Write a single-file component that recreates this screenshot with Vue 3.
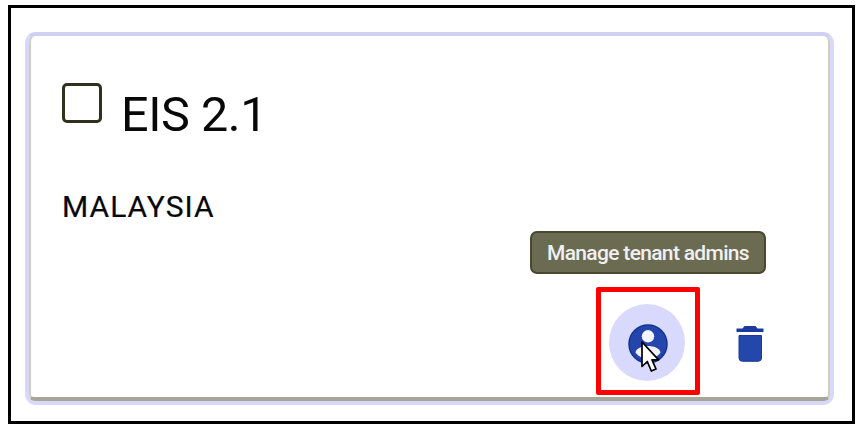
<script setup>
const tenant = { name: 'EIS 2.1', country: 'MALAYSIA' }
</script>

<template>
  <main class="frame">
    <section class="card">
      <div class="surface">
        <header class="heading">
          <span class="checkbox" role="checkbox" aria-checked="false"></span>
          <h1 class="name">{{ tenant.name }}</h1>
        </header>
        <p class="country">{{ tenant.country }}</p>
        <div class="tip-row"><div class="tip">Manage tenant admins</div></div>
        <div class="actions">
          <div class="highlight">
            <button class="account">
              <svg class="person" viewBox="0 0 40 40">
                <defs>
                  <clipPath id="disc"><circle cx="20" cy="20" r="19.3" /></clipPath>
                </defs>
                <circle cx="20" cy="20" r="19" fill="#2446ac" stroke="#12328f" stroke-width="1.5" />
                <circle cx="20" cy="12.3" r="6.2" fill="#f5f5ff" />
                <path clip-path="url(#disc)" d="M7.500 28.500C8 24 15 22 20 22s12 2 12.500 6.500C29.500 32.500 25 35 20 35S10.500 32.500 7.500 28.500Z" fill="#f0f0ff" />
              </svg>
              <svg class="pointer" viewBox="0 0 20 34">
                <path d="M2 2V26.500L7.300 21.500L11.300 31L16 29L12 19.800H18.600Z" fill="#fff" stroke="#000" stroke-width="1.700" stroke-linejoin="round" />
              </svg>
            </button>
          </div>
          <button class="trash">
            <svg viewBox="0 0 28 36">
              <path d="M8.500 0H19.500L21.500 2.500H27.500V6H.500V2.500H6.500Z" fill="#1b3a9e" />
              <path d="M3 9.500H25.500V32Q25.500 35.300 22 35.300H6.500Q3 35.300 3 32Z" fill="#2447ac" stroke="#1b3a9e" stroke-width="1" />
            </svg>
          </button>
        </div>
      </div>
    </section>
  </main>
</template>

<style>
body {
  background: #fff;
}
</style>

<style scoped>
* {
  box-sizing: border-box;
}
.frame {
  width: 847px;
  height: 419px;
  margin: 5px 0 0 8px;
  padding: 24px 18px 16px 14px;
  border: 3px solid #000;
  font-family: Roboto, sans-serif;
  color: #080808;
}
.card {
  width: 809px;
  height: 373px;
  border: 4px solid #d8d8fc;
  border-top-color: #d0d0f4;
  border-radius: 11px;
  background: #fff;
}
.surface {
  display: flex;
  flex-direction: column;
  height: 365px;
  border: solid #d0d0b8;
  border-width: 0 2px 4px;
  border-bottom-color: #a5a598;
  border-radius: 6px;
  padding: 47px 62px 0 31px;
}
.heading {
  display: flex;
  align-items: flex-start;
  height: 106px;
}
.checkbox {
  width: 40px;
  height: 40px;
  border: 3px solid #30301c;
  border-radius: 5px;
}
.name {
  margin: 3px 0 0 19px;
  font-size: 48.5px;
  line-height: 57px;
  font-weight: 400;
  letter-spacing: -0.4px;
  white-space: nowrap;
}
.country {
  height: 42px;
  margin: 0;
  font-size: 30px;
  line-height: 35px;
  letter-spacing: 1.050px;
  -webkit-text-stroke: 0.2px #080808;
  white-space: nowrap;
}
.tip-row {
  display: flex;
  justify-content: flex-end;
}
.tip {
  display: flex;
  align-items: center;
  justify-content: center;
  width: 236px;
  height: 43px;
  padding-top: 1px;
  border: 2px solid #48482f;
  border-radius: 7px;
  background: #6b6b51;
  color: #f0f0f4;
  font-size: 21px;
  font-weight: 500;
  letter-spacing: -0.680px;
  white-space: nowrap;
}
.actions {
  display: flex;
  align-items: flex-start;
  justify-content: flex-end;
  margin-top: 13px;
}
.highlight {
  width: 104px;
  height: 108px;
  padding: 12px 8px;
  border: 5px solid #f00;
  border-radius: 2px;
}
button {
  border: 0;
  padding: 0;
  background: none;
}
.account {
  position: relative;
  display: flex;
  align-items: center;
  justify-content: center;
  width: 76px;
  height: 77px;
  padding: 2px 0 0 1px;
  border-radius: 50%;
  background: #d9d9fe;
}
.person {
  width: 40px;
  height: 40px;
}
.pointer {
  position: absolute;
  left: 31px;
  top: 36px;
  width: 20px;
  height: 34px;
}
.trash {
  width: 28px;
  height: 36px;
  margin: 39px 2px 0 36px;
}
.trash svg {
  display: block;
  width: 28px;
  height: 36px;
}
</style>
